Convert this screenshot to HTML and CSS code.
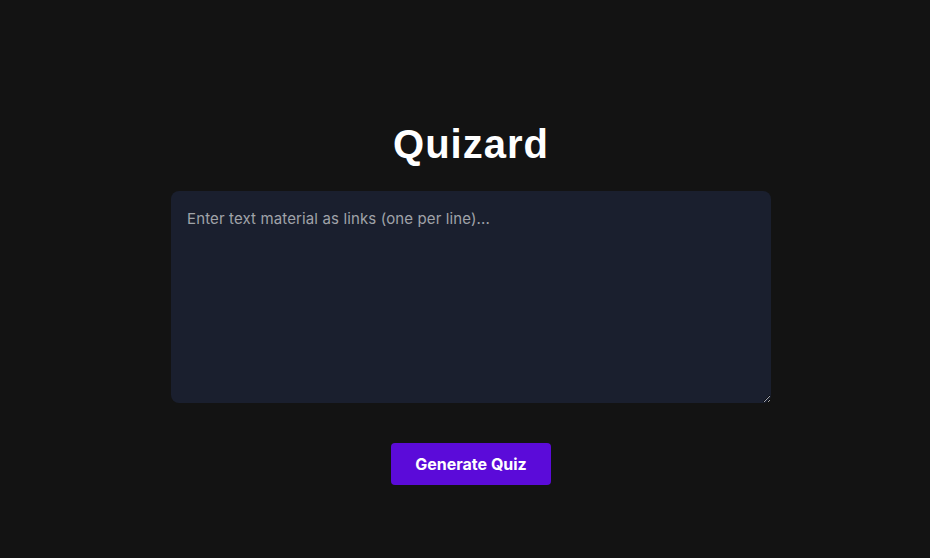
FILE: index.html
```html
<!DOCTYPE html>
<html lang="en">
<head>
<meta charset="utf-8">
<title>Quizard</title>
<link rel="stylesheet" href="styles.css">
</head>
<body>
<main class="app">
  <h1 class="title">Quizard</h1>
  <textarea class="input" placeholder="Enter text material as links (one per line)..."></textarea>
  <button class="btn" type="button">Generate Quiz</button>
</main>
</body>
</html>
```
FILE: styles.css
```css
html, body {
  margin: 0;
  padding: 0;
  height: 100%;
  background: #131313;
}
body {
  font-family: Inter, "Noto Sans", sans-serif;
  color: #fff;
}
.app {
  display: flex;
  flex-direction: column;
  align-items: center;
  padding-top: 118px;
  padding-left: 12px;
}
.title {
  margin: 0;
  font-family: "Liberation Sans", Arial, sans-serif;
  font-weight: 700;
  font-size: 40px;
  line-height: 52px;
  letter-spacing: 1px;
  color: #fff;
}
.input {
  margin-top: 21px;
  box-sizing: border-box;
  width: 600px;
  height: 212px;
  padding: 16px;
  background: #1a1f2e;
  border: none;
  border-radius: 8px;
  color: #e5e7eb;
  font-family: Inter, sans-serif;
  font-size: 15px;
  line-height: 24px;
  letter-spacing: 0.13px;
  outline: none;
}
.input::placeholder {
  color: #a0a3a9;
}
.btn {
  margin-top: 40px;
  width: 160px;
  height: 42px;
  border: none;
  border-radius: 4px;
  background: #5b0bd9;
  color: #fff;
  font-family: Inter, sans-serif;
  font-weight: 700;
  font-size: 16px;
  cursor: pointer;
}
```
